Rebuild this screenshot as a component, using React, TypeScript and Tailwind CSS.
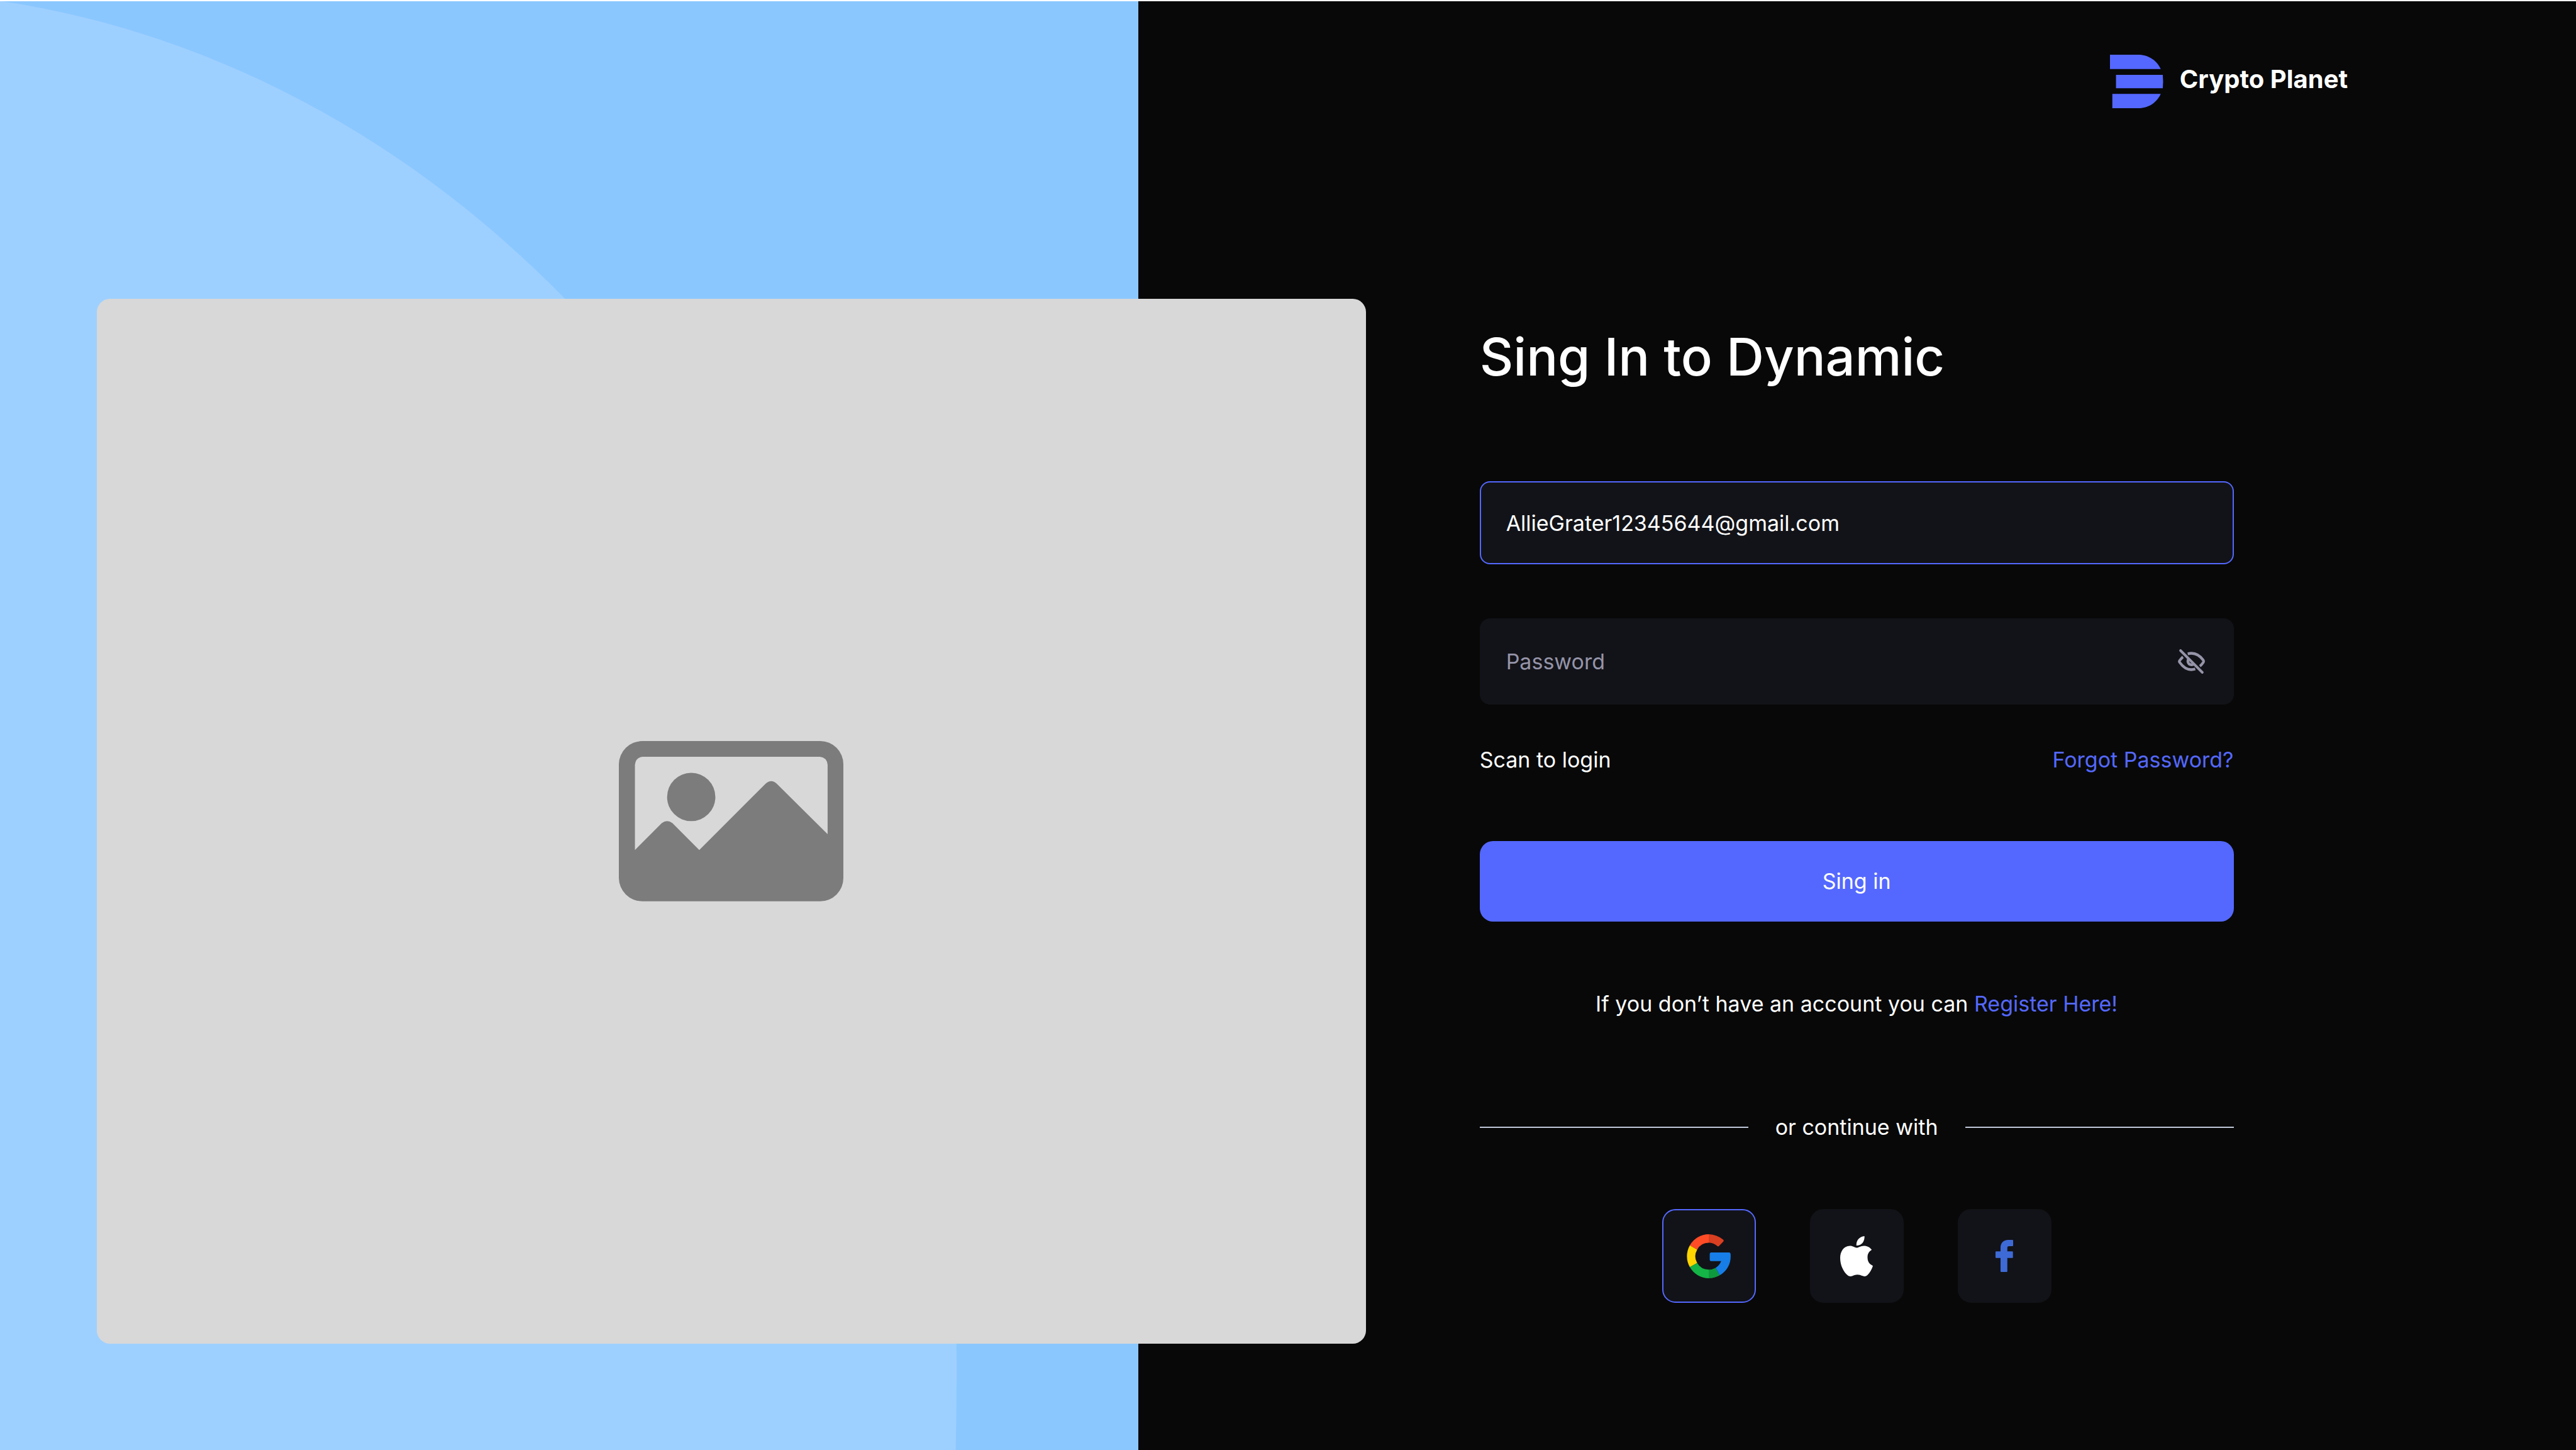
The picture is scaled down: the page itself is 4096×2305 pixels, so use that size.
function BrandMark() {
  return (
    <svg viewBox="0 0 160 160" className="size-[85px] shrink-0" fill="#5468ff" aria-hidden="true">
      <path d="M0 0H84C111 0 138 13 152 43H0Z" />
      <path d="M18 60H158Q160 80 158 100H18Z" />
      <path d="M7 117H152C138 147 111 160 84 160H7Z" />
    </svg>
  );
}

function PictureIcon() {
  return (
    <svg viewBox="0 0 670 478" className="w-[357px]" fill="#7c7c7c" aria-hidden="true">
      <path
        fillRule="evenodd"
        d="M70 0H601A69 69 0 0 1 670 69V409A69 69 0 0 1 601 478H70A70 70 0 0 1 0 409V69A70 70 0 0 1 70 0ZM48 325L128 245Q144 233 160 245L240 325L438 127Q455 112 471 127L623 278V71Q621 49 600 47H71Q50 49 48 71Z"
      />
      <circle cx="216" cy="167" r="72" />
    </svg>
  );
}

function EyeOffIcon() {
  return (
    <svg
      viewBox="576 384 240 206"
      preserveAspectRatio="none"
      className="h-[39px] w-[43px]"
      fill="none"
      stroke="#9594a8"
      strokeWidth="23"
      aria-hidden="true"
    >
      <path d="M600 396L792 578" strokeLinecap="round" />
      <path d="M663 423C710 411 757 420 801 476Q808 487 800 496Q787 514 771 526" />
      <path d="M621 449Q605 462 592 479Q585 487 592 495C633 550 683 564 730 550" />
      <path d="M670 468C658 484 666 515 696 515Q708 516 716 510" />
    </svg>
  );
}

function GoogleIcon() {
  return (
    <svg viewBox="540 529 396 396" className="w-[70px]" aria-hidden="true">
      <path fill="#ff4c26" d="M738 529A198 198 0 0 0 568 629L634 667A120 120 0 0 1 738 606Z" />
      <path fill="#d93f21" d="M738 529Q812 531 869 579Q876 587 870 594L830 635Q823 642 815 635Q780 606 738 606Z" />
      <path fill="#ffd500" d="M568 629A198 198 0 0 0 568 825L634 788A120 120 0 0 1 634 667Z" />
      <path fill="#14b446" d="M568 825A198 198 0 0 0 738 925V847A120 120 0 0 1 634 788Z" />
      <path fill="#0f993e" d="M738 925A198 198 0 0 0 837 898L800 831Q771 847 738 847Z" />
      <path
        fill="#167ee6"
        d="M759 693H921Q932 693 934 705C943 787 904 861 837 898L800 831Q833 812 850 771H759Q747 770 747 758V706Q747 694 759 693Z"
      />
    </svg>
  );
}

function AppleIcon() {
  return (
    <svg viewBox="326 548 171 361" preserveAspectRatio="none" className="h-[64px] w-[52px]" fill="#ffffff" aria-hidden="true">
      <path d="M453 548C455 590 440 636 411 632C408 590 427 550 453 548Z" />
      <path d="M412 652C423 652 432 635 450 635C468 635 482 648 491 671C476 688 469 705 469 739C469 780 480 800 497 814C490 850 479 885 464 903C452 915 440 904 430 897Q415 890 401 898C391 904 378 917 366 901C343 868 326 810 326 744C326 690 343 636 377 636C394 636 402 652 412 652Z" />
    </svg>
  );
}

function FacebookIcon() {
  return (
    <svg viewBox="1132 584 91 289" preserveAspectRatio="none" className="h-[51px] w-[28px]" fill="#3e6ad6" aria-hidden="true">
      <path d="M1199 584H1220Q1223 584 1223 590V634Q1223 640 1220 640H1202Q1193 640 1193 654V687H1219Q1222 687 1222 693V741Q1222 747 1219 747H1193V867Q1193 873 1189 873H1162Q1158 873 1158 867V747H1136Q1132 747 1132 741V693Q1132 687 1136 687H1158V655C1158 613 1172 584 1199 584Z" />
    </svg>
  );
}

const providers = [
  { name: "Google", Icon: GoogleIcon, frame: "border-[#5468ff]" },
  { name: "Apple", Icon: AppleIcon, frame: "border-[#121318]" },
  { name: "Facebook", Icon: FacebookIcon, frame: "border-[#121318]" },
];

function Backdrop() {
  return (
    <div className="absolute inset-y-0 left-0 w-[44.18%] bg-[#8bc7ff]" aria-hidden="true">
      <svg viewBox="0 3 3393 4318" preserveAspectRatio="none" className="h-full w-full">
        <path fill="#9ed0ff" d="M0 2C1575 238 2852 1825 2852 4080Q2852 4200 2849 4321H0Z" />
      </svg>
    </div>
  );
}

function SignInForm() {
  return (
    <form
      className="flex w-[30.41%] flex-col pt-[42px] pb-[65px] text-[34px] leading-[42px]"
      onSubmit={(e) => e.preventDefault()}
    >
      <h1 className="text-[83px] leading-[100px] font-medium whitespace-nowrap">Sing In to Dynamic</h1>

      <input
        type="email"
        aria-label="Email"
        defaultValue="AllieGrater12345644@gmail.com"
        className="mt-[148px] h-[132px] w-full rounded-[16px] border-2 border-[#5468ff] bg-[#121318] px-[40px] outline-none"
      />

      <div className="mt-[86px] flex h-[137px] items-center rounded-[16px] bg-[#121318] pr-[46px] pl-[42px]">
        <input
          type="password"
          aria-label="Password"
          placeholder="Password"
          className="h-full min-w-0 flex-1 bg-transparent outline-none placeholder:text-[#9594a8]"
        />
        <button type="button" aria-label="Show password">
          <EyeOffIcon />
        </button>
      </div>

      <div className="mt-[67px] flex justify-between">
        <a href="#scan">Scan to login</a>
        <a href="#forgot" className="text-[#5468ff]">Forgot Password?</a>
      </div>

      <button type="submit" className="mt-[108px] h-[128px] rounded-[21px] bg-[#5468ff]">
        Sing in
      </button>

      <p className="mt-[110px] text-center">
        If you don’t have an account you can{" "}
        <a href="#register" className="text-[#5468ff]">Register Here!</a>
      </p>

      <div className="mt-[154px] flex items-center gap-[43px]">
        <span className="h-[2px] flex-1 bg-[#c0c8d8]" />
        <span>or continue with</span>
        <span className="h-[2px] flex-1 bg-[#c0c8d8]" />
      </div>

      <div className="mt-[109px] flex justify-center gap-[86px]">
        {providers.map(({ name, Icon, frame }) => (
          <button
            key={name}
            type="button"
            aria-label={`Continue with ${name}`}
            className={`flex size-[149px] items-center justify-center rounded-[21px] border-2 bg-[#121318] ${frame}`}
          >
            <Icon />
          </button>
        ))}
      </div>
    </form>
  );
}

export default function App() {
  return (
    <div className="relative min-h-screen border-t-2 border-white bg-[#080808] font-['Inter',sans-serif] text-white">
      <Backdrop />
      <div className="relative">
        <header className="flex items-center justify-end gap-[26px] pt-[85px] pr-[8.86%]">
          <BrandMark />
          <span className="pb-2 text-[40px] leading-[48px] font-bold">Crypto Planet</span>
        </header>
        <main className="mt-[303px] flex gap-[4.58%] pl-[3.75%]">
          <div className="flex w-[51.2%] items-center justify-center rounded-[21px] bg-[#d8d8d8]">
            <PictureIcon />
          </div>
          <SignInForm />
        </main>
      </div>
    </div>
  );
}
